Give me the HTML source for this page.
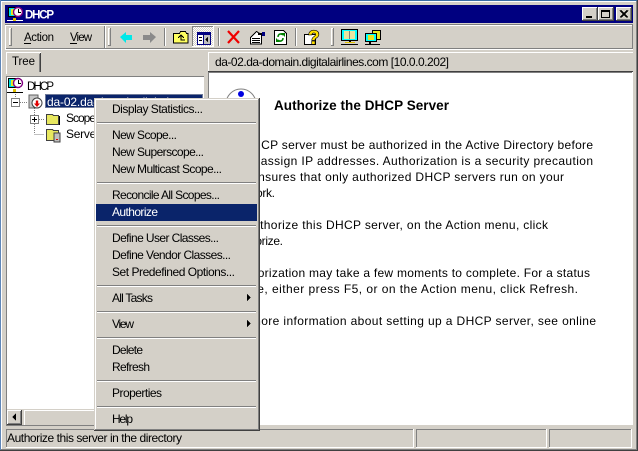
<!DOCTYPE html>
<html><head><meta charset="utf-8"><style>
html,body{margin:0;padding:0;background:#D4D0C8;width:638px;height:451px;overflow:hidden}
svg{display:block}
text{font-family:"Liberation Sans",sans-serif;font-size:11.5px;fill:#000}
.b{font-weight:bold}
.p{font-size:12px}
</style></head><body>
<svg width="638" height="451" viewBox="0 0 638 451" shape-rendering="crispEdges">
<defs>
<pattern id="dith" width="2" height="2" patternUnits="userSpaceOnUse"><rect width="2" height="2" fill="#fff"/><rect width="1" height="1" fill="#D4D0C8"/><rect x="1" y="1" width="1" height="1" fill="#D4D0C8"/></pattern>
</defs>
<!-- window frame -->
<rect width="638" height="451" fill="#D4D0C8"/>
<rect x="0" y="0" width="638" height="1" fill="#3A6EA5"/>
<rect x="0" y="0" width="1" height="451" fill="#5F86B8"/>
<rect x="1" y="1" width="636" height="1" fill="#fff"/>
<rect x="1" y="1" width="1" height="448" fill="#fff"/>
<rect x="636" y="1" width="1" height="449" fill="#808080"/>
<rect x="637" y="0" width="1" height="451" fill="#404040"/>
<rect x="1" y="449" width="636" height="1" fill="#808080"/>
<rect x="0" y="450" width="638" height="1" fill="#404040"/>
<!-- title bar -->
<rect x="5" y="5" width="628" height="18" fill="#000080"/>
<g>
<rect x="8" y="7" width="12" height="10" fill="#000"/><rect x="9" y="8" width="10" height="8" fill="#00E0E0"/><rect x="11" y="9" width="6" height="6" fill="#E8E820"/>
<circle cx="18" cy="12" r="4.5" fill="#fff" stroke="#800080" stroke-width="1.4" shape-rendering="auto"/>
<rect x="18" y="9" width="1" height="3" fill="#000"/><rect x="18" y="12" width="3" height="1" fill="#000"/>
<rect x="7" y="20" width="16" height="1" fill="#fff"/><rect x="13" y="18" width="3" height="3" fill="#E0C000"/>
</g>
<text class="b" x="25" y="18.5" textLength="29" style="fill:#fff">DHCP</text>
<!-- window buttons -->
<g>
<rect x="582" y="7" width="16" height="14" fill="#404040"/><rect x="582" y="7" width="15" height="13" fill="#fff"/><rect x="583" y="8" width="14" height="12" fill="#808080"/><rect x="583" y="8" width="13" height="11" fill="#D4D0C8"/><rect x="586" y="16" width="6" height="2" fill="#000"/>
<rect x="598" y="7" width="16" height="14" fill="#404040"/><rect x="598" y="7" width="15" height="13" fill="#fff"/><rect x="599" y="8" width="14" height="12" fill="#808080"/><rect x="599" y="8" width="13" height="11" fill="#D4D0C8"/><rect x="601.5" y="10.5" width="8" height="7" fill="none" stroke="#000"/><rect x="601" y="10" width="9" height="2" fill="#000"/>
<rect x="616" y="7" width="16" height="14" fill="#404040"/><rect x="616" y="7" width="15" height="13" fill="#fff"/><rect x="617" y="8" width="14" height="12" fill="#808080"/><rect x="617" y="8" width="13" height="11" fill="#D4D0C8"/>
<path d="M620 10.5l7 7M621 10.5l7 7M627 10.5l-7 7M628 10.5l-7 7" stroke="#000" fill="none"/>
</g>
<!-- toolbar band -->
<rect x="5" y="24" width="628" height="1" fill="#808080"/>
<rect x="5" y="25" width="628" height="1" fill="#fff"/>
<rect x="5" y="48" width="628" height="1" fill="#808080"/>
<rect x="5" y="49" width="628" height="1" fill="#fff"/>
<rect x="5" y="25" width="1" height="24" fill="#fff"/>
<rect x="632" y="25" width="1" height="24" fill="#808080"/>
<rect x="104" y="26" width="1" height="22" fill="#808080"/><rect x="105" y="26" width="1" height="22" fill="#fff"/>
<!-- grips -->
<rect x="9" y="28" width="3" height="18" fill="#808080"/><rect x="9" y="28" width="2" height="17" fill="#fff"/><rect x="10" y="29" width="1" height="16" fill="#D4D0C8"/>
<rect x="108" y="28" width="3" height="18" fill="#808080"/><rect x="108" y="28" width="2" height="17" fill="#fff"/><rect x="109" y="29" width="1" height="16" fill="#D4D0C8"/>
<rect x="331" y="28" width="3" height="18" fill="#808080"/><rect x="331" y="28" width="2" height="17" fill="#fff"/><rect x="332" y="29" width="1" height="16" fill="#D4D0C8"/>
<!-- thin separators -->
<rect x="164" y="28" width="1" height="18" fill="#808080"/><rect x="165" y="28" width="1" height="18" fill="#fff"/>
<rect x="218" y="28" width="1" height="18" fill="#808080"/><rect x="219" y="28" width="1" height="18" fill="#fff"/>
<rect x="295" y="28" width="1" height="18" fill="#808080"/><rect x="296" y="28" width="1" height="18" fill="#fff"/>
<text x="24" y="41" textLength="30">Action</text><rect x="24" y="43" width="7" height="1" fill="#000"/>
<text x="70" y="41" textLength="22">View</text><rect x="70" y="43" width="7" height="1" fill="#000"/>
<!-- back / forward -->
<path d="M120 37l6-5v3h6v5h-6v3z" fill="#00E8E8" shape-rendering="auto"/>
<path d="M156 37l-6-5v3h-7v5h7v3z" fill="#8a8a8a" shape-rendering="auto"/>
<!-- up folder -->
<path d="M173.500 33.500h6l1-2h5l1 2h1.500v9.500h-14.500z" fill="#FFFF60" stroke="#000"/>
<path d="M178 38l3-3 3 3M181 35v5h4" stroke="#000" fill="none"/>
<!-- toggle pressed -->
<rect x="192" y="26" width="22" height="21" fill="url(#dith)"/>
<rect x="192" y="26" width="22" height="1" fill="#808080"/><rect x="192" y="26" width="1" height="21" fill="#808080"/><rect x="213" y="26" width="1" height="21" fill="#fff"/><rect x="192" y="46" width="22" height="1" fill="#fff"/>
<rect x="197" y="32" width="14" height="13" fill="#000080"/><rect x="198" y="35" width="5" height="9" fill="#fff"/><rect x="204" y="35" width="6" height="9" fill="#C0C0C0"/>
<rect x="199" y="37" width="3" height="1" fill="#000"/><rect x="199" y="40" width="3" height="1" fill="#000"/>
<path d="M208 37v5l-3-2.500z" fill="#000"/>
<!-- red X -->
<path d="M228 31l11 12M239 31l-11 12" stroke="#F00000" stroke-width="2.200" fill="none" shape-rendering="auto"/>
<!-- properties -->
<path d="M250.500 37.500l6-6 5 3v9.500h-11z" fill="#fff" stroke="#000"/>
<rect x="252" y="38" width="8" height="1" fill="#000"/><rect x="252" y="40" width="8" height="1" fill="#000"/><rect x="252" y="42" width="8" height="1" fill="#000"/>
<rect x="262" y="32" width="3" height="4" fill="#000080"/><rect x="258" y="33" width="4" height="2" fill="#000"/>
<!-- refresh -->
<path d="M274.500 30.500h9l3 3v11h-12z" fill="#fff" stroke="#000"/>
<path d="M278 37c0-3 3-4 5-2M283 38c0 3-3 4-5 2" stroke="#008000" stroke-width="1.500" fill="none" shape-rendering="auto"/>
<path d="M281 33h4v4zM280 42h-4v-4z" fill="#008000" shape-rendering="auto"/>
<!-- help -->
<path d="M304.500 34.500h11v10h-11z" fill="#fff" stroke="#000"/>
<text class="b" x="308" y="44" style="font-size:19px;fill:#FFE000;stroke:#000;stroke-width:1.300px;paint-order:stroke">?</text>
<!-- monitor icons -->
<rect x="341" y="29" width="17" height="12" fill="#000"/><rect x="342" y="30" width="15" height="10" fill="#00FFFF"/><rect x="344" y="31" width="11" height="8" fill="#E6E6A0"/><rect x="349" y="31" width="1" height="8" fill="#808080"/>
<rect x="349" y="41" width="2" height="2" fill="#000"/><rect x="345" y="42" width="10" height="1" fill="#E0C000"/><rect x="341" y="44" width="17" height="1" fill="#000"/>
<rect x="372" y="30" width="9" height="10" fill="#000"/><rect x="373" y="31" width="7" height="8" fill="#E6E620"/>
<rect x="365" y="33" width="12" height="9" fill="#000"/><rect x="366" y="34" width="10" height="7" fill="#00FFFF"/><rect x="368" y="35" width="6" height="5" fill="#E6E620"/>
<rect x="369" y="42" width="2" height="2" fill="#000"/><rect x="365" y="44" width="15" height="1" fill="#000"/>
<!-- tab Tree -->
<rect x="6" y="52" width="35" height="1" fill="#fff"/><rect x="6" y="52" width="1" height="22" fill="#fff"/>
<rect x="40" y="53" width="1" height="19" fill="#404040"/><rect x="39" y="54" width="1" height="18" fill="#808080"/>
<text x="12" y="65" textLength="23">Tree</text>
<!-- tree pane -->
<rect x="6" y="76" width="199" height="350" fill="#808080"/>
<rect x="7" y="77" width="197" height="348" fill="#fff"/>
<rect x="6" y="75" width="199" height="1" fill="#D4D0C8"/>
<!-- right header -->
<rect x="208" y="52" width="425" height="1" fill="#fff"/><rect x="208" y="52" width="1" height="20" fill="#fff"/>
<text x="215" y="66" class="p" textLength="234">da-02.da-domain.digitalairlines.com [10.0.0.202]</text>
<!-- right pane -->
<rect x="208" y="71" width="425" height="1" fill="#404040"/>
<rect x="208" y="72" width="425" height="1" fill="#808080"/>
<rect x="208" y="72" width="1" height="354" fill="#808080"/>
<rect x="209" y="73" width="423" height="352" fill="#fff"/>
<rect x="632" y="72" width="1" height="354" fill="#fff"/>
<rect x="208" y="425" width="425" height="1" fill="#D4D0C8"/>
<rect x="204" y="76" width="1" height="350" fill="#D4D0C8"/>
<!-- circle icon -->
<circle cx="241" cy="104" r="15" fill="#fff" stroke="#808080" shape-rendering="auto"/>
<circle cx="241" cy="94" r="3" fill="#0000E0" shape-rendering="auto"/>
<text class="b" x="274" y="110" style="font-size:13.500px" textLength="175">Authorize the DHCP Server</text>
<text class="p" x="232" y="149" textLength="361">A DHCP server must be authorized in the Active Directory before</text>
<text class="p" x="226" y="165" textLength="367">it can assign IP addresses. Authorization is a security precaution</text>
<text class="p" x="226" y="181" textLength="338">that ensures that only authorized DHCP servers run on your</text>
<text class="p" x="232" y="197" textLength="43">network.</text>
<text class="p" x="229" y="229" textLength="319">To authorize this DHCP server, on the Action menu, click</text>
<text class="p" x="232" y="245" textLength="51">Authorize.</text>
<text class="p" x="232" y="277" textLength="358">Authorization may take a few moments to complete. For a status</text>
<text class="p" x="225" y="293" textLength="353">update, either press F5, or on the Action menu, click Refresh.</text>
<text class="p" x="228" y="325" textLength="368">For more information about setting up a DHCP server, see online</text>
<!-- tree content -->
<rect x="8" y="78" width="12" height="10" fill="#000"/><rect x="9" y="79" width="10" height="8" fill="#00E0E0"/><rect x="11" y="80" width="6" height="6" fill="#E8E820"/>
<circle cx="18" cy="83" r="4.500" fill="#fff" stroke="#800080" stroke-width="1.400" shape-rendering="auto"/>
<rect x="18" y="80" width="1" height="3" fill="#000"/><rect x="18" y="83" width="3" height="1" fill="#000"/>
<rect x="7" y="92" width="16" height="1" fill="#000"/><rect x="13" y="89" width="3" height="3" fill="#E0C000"/>
<text x="27" y="90" textLength="27">DHCP</text>
<path d="M15.500 94v3M20 102.500h8M34.500 108v26M39 119.500h6M34.500 134.500h10" stroke="#808080" stroke-dasharray="1 1" fill="none"/>
<rect x="11.500" y="98.500" width="8" height="8" fill="#fff" stroke="#808080"/><rect x="13" y="102" width="5" height="1" fill="#000"/>
<rect x="29" y="95" width="9" height="13" fill="#C8C8C8" stroke="#606060" stroke-width="1"/>
<circle cx="37" cy="103" r="5" fill="#fff" stroke="#404040" shape-rendering="auto"/><path d="M37 107l-3-3.500h1.800v-3h2.400v3h1.800z" fill="#E00000" shape-rendering="auto"/>
<rect x="45" y="94" width="158" height="14" fill="#0A246A"/>
<rect x="45.500" y="94.500" width="157" height="13" fill="none" stroke="#D4D0C8" stroke-dasharray="1 1"/>
<text x="47" y="106" class="p" textLength="122" style="fill:#fff">da-02.da-domain.digital</text>
<rect x="30.500" y="115.500" width="8" height="8" fill="#fff" stroke="#808080"/><rect x="32" y="119" width="5" height="1" fill="#000"/><rect x="34" y="117" width="1" height="5" fill="#000"/>
<path d="M46.500 114.500h6l1 1h5v9h-12z" fill="#E8E860" stroke="#404040"/><rect x="59" y="116" width="1" height="9" fill="#000"/>
<path d="M46.500 129.500h6l1 1h5v10h-12z" fill="#E8E860" stroke="#404040"/><rect x="54" y="133" width="6" height="9" fill="#C0C0C0" stroke="#404040"/><rect x="56" y="139" width="2" height="1" fill="#E00000"/>
<text x="66" y="122" class="p" textLength="30">Scope</text>
<text x="66" y="138" class="p" textLength="34">Server</text>
<!-- scrollbar -->
<rect x="7" y="409" width="197" height="16" fill="#D4D0C8"/>
<rect x="7" y="410" width="15" height="15" fill="#404040"/><rect x="7" y="410" width="14" height="14" fill="#fff"/><rect x="8" y="411" width="13" height="13" fill="#808080"/><rect x="8" y="411" width="12" height="12" fill="#D4D0C8"/>
<path d="M12 417l4-4v8z" fill="#000"/>
<rect x="24" y="410" width="180" height="1" fill="#fff"/><rect x="24" y="410" width="1" height="15" fill="#fff"/>
<!-- status bar -->
<rect x="6" y="429" width="407" height="1" fill="#808080"/><rect x="6" y="429" width="1" height="18" fill="#808080"/>
<rect x="413" y="429" width="1" height="18" fill="#fff"/><rect x="6" y="447" width="408" height="1" fill="#fff"/>
<rect x="416" y="429" width="130" height="1" fill="#808080"/><rect x="416" y="429" width="1" height="18" fill="#808080"/>
<rect x="546" y="429" width="1" height="18" fill="#fff"/><rect x="416" y="447" width="131" height="1" fill="#fff"/>
<rect x="549" y="429" width="82" height="1" fill="#808080"/><rect x="549" y="429" width="1" height="18" fill="#808080"/>
<rect x="631" y="429" width="1" height="18" fill="#fff"/><rect x="549" y="447" width="83" height="1" fill="#fff"/>
<text x="7" y="442" class="p" textLength="175">Authorize this server in the directory</text>
<!-- context menu -->
<rect x="94" y="98" width="166" height="333" fill="#404040"/>
<rect x="94" y="98" width="165" height="332" fill="#D4D0C8"/>
<rect x="95" y="99" width="163" height="330" fill="#D4D0C8"/>
<rect x="95" y="99" width="163" height="1" fill="#fff"/>
<rect x="95" y="99" width="1" height="330" fill="#fff"/>
<rect x="258" y="99" width="1" height="331" fill="#808080"/>
<rect x="95" y="429" width="164" height="1" fill="#808080"/>
<rect x="96" y="204" width="161" height="17" fill="#0A246A"/>
<g fill="#808080">
<rect x="97" y="122" width="159" height="1"/><rect x="97" y="182" width="159" height="1"/><rect x="97" y="225" width="159" height="1"/><rect x="97" y="285" width="159" height="1"/><rect x="97" y="311" width="159" height="1"/><rect x="97" y="337" width="159" height="1"/><rect x="97" y="380" width="159" height="1"/><rect x="97" y="406" width="159" height="1"/>
</g>
<g fill="#fff">
<rect x="97" y="123" width="159" height="1"/><rect x="97" y="183" width="159" height="1"/><rect x="97" y="226" width="159" height="1"/><rect x="97" y="286" width="159" height="1"/><rect x="97" y="312" width="159" height="1"/><rect x="97" y="338" width="159" height="1"/><rect x="97" y="381" width="159" height="1"/><rect x="97" y="407" width="159" height="1"/>
</g>
<text x="112" y="113" class="p" textLength="91">Display Statistics...</text>
<text x="112" y="139" class="p" textLength="65">New Scope...</text>
<text x="112" y="156" class="p" textLength="92">New Superscope...</text>
<text x="112" y="173" class="p" textLength="110">New Multicast Scope...</text>
<text x="112" y="199" class="p" textLength="108">Reconcile All Scopes...</text>
<text x="112" y="216" class="p" textLength="46" style="fill:#fff">Authorize</text>
<text x="112" y="242" class="p" textLength="107">Define User Classes...</text>
<text x="112" y="259" class="p" textLength="119">Define Vendor Classes...</text>
<text x="112" y="276" class="p" textLength="123">Set Predefined Options...</text>
<text x="112" y="302" class="p" textLength="41">All Tasks</text>
<text x="112" y="328" class="p" textLength="22">View</text>
<text x="112" y="354" class="p" textLength="31">Delete</text>
<text x="112" y="371" class="p" textLength="38">Refresh</text>
<text x="112" y="397" class="p" textLength="50">Properties</text>
<text x="112" y="423" class="p" textLength="21">Help</text>
<path d="M247 294v7l4-3.500zM247 320v7l4-3.500z" fill="#000"/>
</svg>
</body></html>
